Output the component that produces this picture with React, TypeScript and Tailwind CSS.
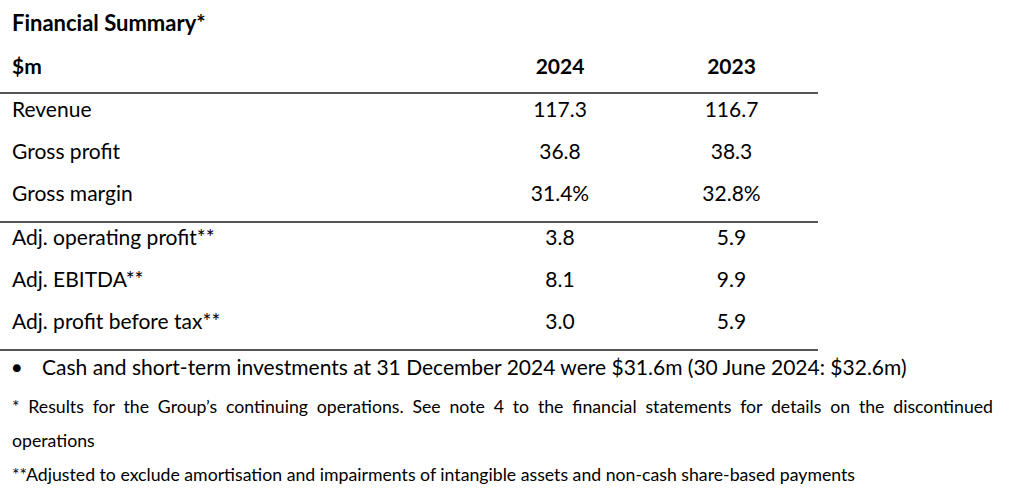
const rows1 = [
  { label: "Revenue", a: "117.3", b: "116.7" },
  { label: "Gross profit", a: "36.8", b: "38.3" },
  { label: "Gross margin", a: "31.4%", b: "32.8%" },
];

const rows2 = [
  { label: "Adj. operating profit**", a: "3.8", b: "5.9" },
  { label: "Adj. EBITDA**", a: "8.1", b: "9.9" },
  { label: "Adj. profit before tax**", a: "3.0", b: "5.9" },
];

const Row = ({ label, a, b }: { label: string; a: string; b: string }) => {
  return (
    <div className="flex h-[42px] items-start">
      <div className="w-[475px] pl-[12px] leading-[28px]">{label}</div>
      <div className="w-[170px] text-center leading-[28px]">{a}</div>
      <div className="w-[173px] text-center leading-[28px]">{b}</div>
    </div>
  );
};

export default function App() {
  return (
    <div
      className="w-[1024px] h-[496px] bg-white text-black overflow-hidden"
      style={{ fontFamily: "Lato, 'Liberation Sans', sans-serif" }}
    >
      <div className="text-[21px]">
        <div className="h-[44px] pl-[12px] flex items-center font-bold text-[22px]">
          Financial Summary*
        </div>
        <div className="w-[818px] border-b-2 border-[#555] pb-[4px]">
          <div className="flex h-[44px] items-center font-bold">
            <div className="w-[475px] pl-[12px]">$m</div>
            <div className="w-[170px] text-center">2024</div>
            <div className="w-[173px] text-center">2023</div>
          </div>
        </div>
        <div className="w-[818px] border-b-2 border-[#555] pt-[1px]">
          {rows1.map(r => (
            <Row key={r.label} {...r} />
          ))}
        </div>
        <div className="w-[818px] border-b-2 border-[#555]">
          {rows2.map(r => (
            <Row key={r.label} {...r} />
          ))}
        </div>
        <div className="flex h-[32px] items-center">
          <span className="w-[42px] pl-[12px] text-[16px]">●</span>
          <span>
            Cash and short-term investments at 31 December 2024 were $31.6m (30
            June 2024: $32.6m)
          </span>
        </div>
      </div>
      <div className="mt-[7px] pl-[12px] w-[993px] text-[17.7px] leading-[34px]">
        <p className="text-justify">
          * Results for the Group’s continuing operations. See note 4 to the
          financial statements for details on the discontinued operations
        </p>
        <p>
          **Adjusted to exclude amortisation and impairments of intangible
          assets and non-cash share-based payments
        </p>
      </div>
    </div>
  );
}
